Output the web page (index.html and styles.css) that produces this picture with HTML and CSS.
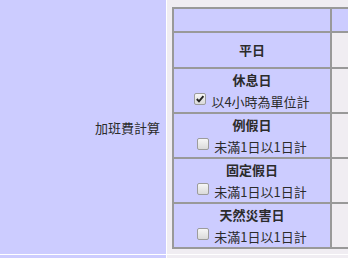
FILE: index.html
```html
<!DOCTYPE html>
<html lang="zh-Hant">
<head>
    <meta charset="UTF-8">
    <meta name="viewport" content="width=device-width, initial-scale=1.0">
    <title>加班費計算</title>
    <link rel="stylesheet" href="styles.css">
</head>
<body>
<table class="form">
    <tr>
        <th class="label">加班費計算</th>
        <td class="field">
            <table class="grid">
                <tr>
                    <th class="head"><div class="blank"></div></th>
                    <td class="head value"></td>
                </tr>
                <tr>
                    <th><div class="single">平日</div></th>
                    <td class="value"></td>
                </tr>
                <tr>
                    <th>
                        <div class="title">休息日</div>
                        <label class="opt"><span class="box"><svg width="10" height="10" viewBox="0 0 10 10"><path d="M1.8 5 L4 7.4 L8.4 2.2" fill="none" stroke="#222" stroke-width="1.9"/></svg></span>以4小時為單位計</label>
                    </th>
                    <td class="value"></td>
                </tr>
                <tr>
                    <th>
                        <div class="title">例假日</div>
                        <label class="opt"><span class="box"></span>未滿1日以1日計</label>
                    </th>
                    <td class="value"></td>
                </tr>
                <tr>
                    <th>
                        <div class="title">固定假日</div>
                        <label class="opt"><span class="box"></span>未滿1日以1日計</label>
                    </th>
                    <td class="value"></td>
                </tr>
                <tr>
                    <th>
                        <div class="title">天然災害日</div>
                        <label class="opt"><span class="box"></span>未滿1日以1日計</label>
                    </th>
                    <td class="value"></td>
                </tr>
            </table>
        </td>
    </tr>
    <tr>
        <th class="label"><div class="blank"></div></th>
        <td class="field"></td>
    </tr>
</table>
</body>
</html>
```

FILE: styles.css
```css
html, body {
    overflow: hidden;
}
body {
    margin: 0;
    background: #fff;
    font-family: "Noto Sans CJK TC", "Liberation Sans", sans-serif;
    font-size: 13px;
    color: #2b2b2b;
}
.form {
    border-spacing: 0;
    table-layout: fixed;
    width: 800px;
}
.form .label {
    width: 160px;
    padding: 0 6px 0 0;
    background: #ccccff;
    text-align: right;
    font-weight: normal;
    vertical-align: middle;
    border-right: 1px solid #fff;
    border-bottom: 1px solid #fff;
}
.form .field {
    padding: 7px 0 5px 5px;
    background: #f0edf2;
    vertical-align: top;
    border-bottom: 1px solid #fff;
}
.grid {
    border-spacing: 0;
    border: 1px solid #999;
    table-layout: fixed;
    width: 462px;
}
.grid th, .grid td {
    border: 1px solid #999;
    padding: 0;
}
.grid th {
    width: 156px;
    background: #ccccff;
    text-align: center;
    vertical-align: middle;
}
.grid .head {
    background: #ccccff;
}
.blank {
    height: 22px;
}
.single {
    line-height: 34px;
    font-weight: bold;
}
.title {
    height: 22px;
    line-height: 22px;
    font-weight: bold;
}
.opt {
    display: flex;
    justify-content: center;
    align-items: flex-start;
    height: 21px;
    line-height: 21px;
    font-weight: normal;
}
.box {
    display: flex;
    align-items: center;
    justify-content: center;
    box-sizing: border-box;
    width: 12px;
    height: 12px;
    margin: 2px 5px 0 0;
    border: 1px solid #9c9c9c;
    border-radius: 2px;
    background: linear-gradient(#f6f6f6, #dadada);
}
```
